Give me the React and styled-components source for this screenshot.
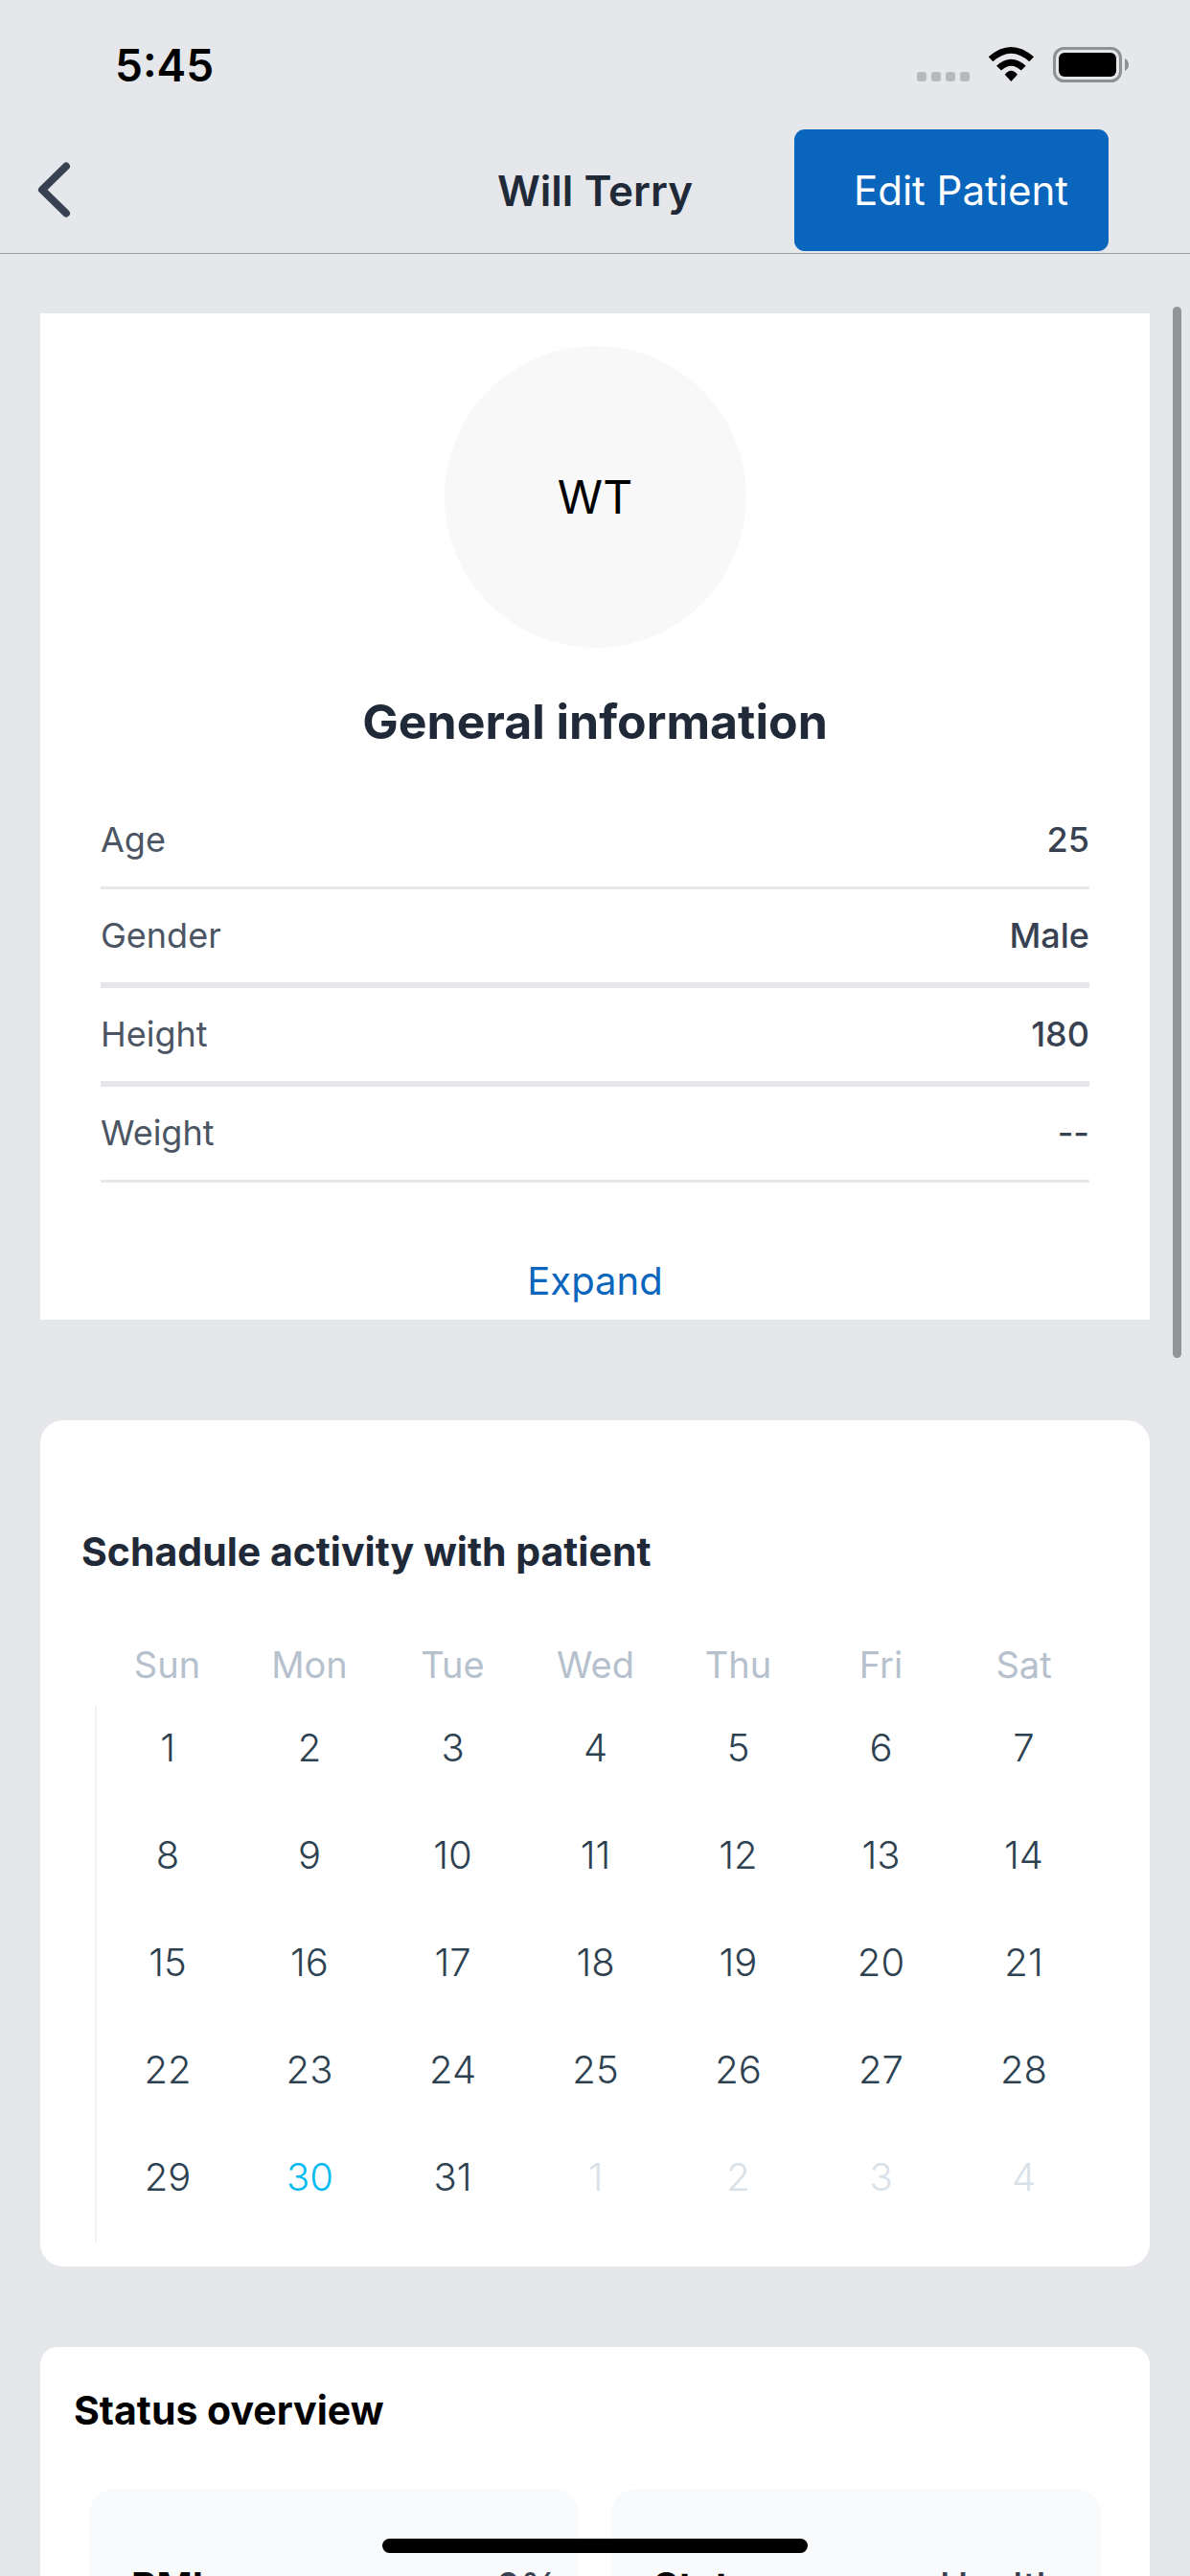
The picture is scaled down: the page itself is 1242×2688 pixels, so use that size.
import React, { useState } from 'react';
import styled, { createGlobalStyle } from 'styled-components';

const GlobalStyle = createGlobalStyle`
    * {
        box-sizing: border-box;
    }
    html, body, #root {
        height: 100%;
    }
    body {
        margin: 0;
        overflow: hidden;
        background-color: #e5e7eb;
        font-family: Inter, "Liberation Sans", sans-serif;
        color: #1f2937;
    }
    button {
        border: none;
        padding: 0;
        background-color: transparent;
        font-family: inherit;
        cursor: pointer;
    }
    h1, h2, dl, dd {
        margin: 0;
    }
`;

const Screen = styled.div`
    position: relative;
    display: flex;
    flex-direction: column;
    height: 100%;
    overflow: hidden;
`;

const StatusBar = styled.div`
    flex: none;
    display: flex;
    justify-content: space-between;
    align-items: center;
    height: 132px;
    padding: 4px 64px 0 120px;
    color: #000;
    font-size: 46px;
    font-weight: 600;
`;

const Header = styled.header`
    flex: none;
    display: grid;
    grid-template-columns: 1fr auto 1fr;
    align-items: center;
    height: 133px;
    padding: 0 85px 0 36px;
    border-bottom: 1px solid #a0a2a8;
`;

const BackButton = styled.button`
    display: flex;
    justify-self: start;
`;

const Title = styled.h1`
    padding: 2px 0 0 49px;
    font-size: 44px;
    font-weight: 600;
    line-height: 56px;
`;

const EditButton = styled.button`
    justify-self: end;
    height: 127px;
    padding: 0 42px 0 62px;
    border-radius: 11px;
    background-color: #0a65bd;
    color: #fff;
    font-size: 42px;
`;

const Content = styled.main`
    flex: 1;
    min-height: 0;
    display: flex;
    flex-direction: column;
    padding: 62px 42px 0;
    > * {
        flex: none;
    }
`;

const InfoCard = styled.section`
    display: flex;
    flex-direction: column;
    align-items: center;
    padding: 34px 63px 8px;
    margin-bottom: 105px;
    background-color: #fff;
`;

const Avatar = styled.div`
    display: flex;
    justify-content: center;
    align-items: center;
    width: 315px;
    height: 315px;
    margin-bottom: 44px;
    border-radius: 50%;
    background-color: #f8f8f8;
    color: #000;
    font-size: 48px;
`;

const InfoTitle = styled.h2`
    margin-bottom: 42px;
    font-size: 50px;
    font-weight: 700;
    line-height: 66px;
`;

const InfoList = styled.dl`
    width: 100%;
    margin-bottom: 71px;
`;

const InfoRow = styled.div`
    display: flex;
    justify-content: space-between;
    align-items: center;
    border-bottom: ${props => props.$thick ? '6px' : '3px'} solid #e5e7eb;
    font-size: 36px;
    line-height: 97px;
    dt {
        color: #4b5563;
    }
    dd {
        color: #374151;
        font-weight: 500;
    }
`;

const ExpandButton = styled.button`
    color: #0a65bd;
    font-size: 40px;
    line-height: 64px;
`;

const Card = styled.section`
    background-color: #fff;
    border-radius: ${props => props.$radius};
    padding: ${props => props.$padding};
    margin-bottom: 84px;
`;

const CardTitle = styled.h2`
    color: ${props => props.$color};
    font-size: 41px;
    font-weight: 700;
    line-height: 60px;
`;

const CalendarWrap = styled.div`
    padding: 55px 0 0 14px;
`;

const Calendar = styled.table`
    width: 100%;
    border-collapse: collapse;
    table-layout: fixed;
    text-align: center;
    th, td {
        padding: 0;
    }
    th {
        height: 76px;
        padding-bottom: 10px;
        color: #b6c1cd;
        font-size: 38px;
        font-weight: 400;
    }
    td {
        height: 112px;
        padding-bottom: 26px;
    }
    tbody {
        border-left: 2px solid #f0f2f4;
    }
`;

const Day = styled.button`
    color: ${props => props.$color};
    font-size: 40px;
    font-weight: 300;
`;

const StatRow = styled.div`
    display: grid;
    grid-template-columns: 1fr 1fr;
    gap: 34px;
    padding: 52px 15px 0 16px;
`;

const Stat = styled.div`
    display: flex;
    justify-content: space-between;
    align-items: baseline;
    padding: 72px 21px 60px 44px;
    border-radius: 26px;
    background-color: #f9fafb;
    line-height: 60px;
    strong {
        color: #000;
        font-size: 40px;
        font-weight: 700;
    }
    span {
        color: #374151;
        font-size: 40px;
        font-weight: 500;
    }
`;

const ScrollThumb = styled.div`
    position: absolute;
    top: 320px;
    right: 9px;
    width: 9px;
    height: 1097px;
    border-radius: 5px;
    background-color: #939498;
`;

const HomeIndicator = styled.div`
    position: absolute;
    bottom: 24px;
    left: 50%;
    width: 444px;
    height: 15px;
    border-radius: 8px;
    background-color: #000;
    transform: translateX(-50%);
`;

const info = [
    { label: 'Age', value: '25' },
    { label: 'Gender', value: 'Male', thick: true },
    { label: 'Height', value: '180', thick: true },
    { label: 'Weight', value: '--' },
];

const weekDays = ['Sun', 'Mon', 'Tue', 'Wed', 'Thu', 'Fri', 'Sat'];
const daysInMonth = 31;
const today = 30;

const weeks = [0, 1, 2, 3, 4].map((week) => weekDays.map((_, i) => week * 7 + i + 1));

const dayColor = (day) => {
    if (day > daysInMonth) return '#d9e1e8';
    return day === today ? '#00bbf2' : '#2d4150';
};

function StatusIcons() {
  return (
    <svg width="224" height="46" viewBox="0 2 224 46" aria-hidden="true">
        <g fill="#b8b9bd">
            <rect x="3" y="32" width="10" height="10" rx="3" />
            <rect x="18" y="32" width="10" height="10" rx="3" />
            <rect x="33" y="32" width="10" height="10" rx="3" />
            <rect x="48" y="32" width="10" height="10" rx="3" />
        </g>
        <path d="M77.700 16.300Q101.300 -4.300 125 16.300L120.300 21.300Q101.300 4.100 82.300 21.300Z" />
        <path d="M86 25.700Q101.300 11.700 116.700 25.700L111.700 30.500Q101.300 21 91 30.500Z" />
        <path d="M94.700 34.700Q101.300 26.700 108 34.700L101.300 42Z" />
        <rect x="146.500" y="7.500" width="69" height="34" rx="10" fill="none" stroke="#8f9093" strokeWidth="3" />
        <rect x="151" y="12" width="60" height="25" rx="6" />
        <path d="M220 18Q224 20 224 24.500T220 31Z" fill="#8f9093" />
    </svg>
  )
}

export default function App() {

    const [isExpanded, setIsExpanded] = useState(false);

  return (
    <Screen>
        <GlobalStyle />
        <StatusBar>
            <span>5:45</span>
            <StatusIcons />
        </StatusBar>
        <Header>
            <BackButton aria-label="Back">
                <svg width="42" height="64" viewBox="0 0 42 64" fill="none" stroke="#374151" strokeWidth="8" strokeLinecap="round" strokeLinejoin="round">
                    <path d="M33 7.500L8 32L33 56.500" />
                </svg>
            </BackButton>
            <Title>Will Terry</Title>
            <EditButton>Edit Patient</EditButton>
        </Header>
        <Content>
            <InfoCard>
                <Avatar>WT</Avatar>
                <InfoTitle>General information</InfoTitle>
                <InfoList>
                    {info.map(({ label, value, thick }) => (
                        <InfoRow key={label} $thick={thick}>
                            <dt>{label}</dt>
                            <dd>{value}</dd>
                        </InfoRow>
                    ))}
                </InfoList>
                <ExpandButton aria-expanded={isExpanded} onClick={() => setIsExpanded(!isExpanded)}>
                    Expand
                </ExpandButton>
            </InfoCard>
            <Card $radius="24px" $padding="107px 57px 25px 43px">
                <CardTitle $color="#1f2937">Schadule activity with patient</CardTitle>
                <CalendarWrap>
                    <Calendar>
                        <thead>
                            <tr>
                                {weekDays.map((name) => <th key={name} scope="col">{name}</th>)}
                            </tr>
                        </thead>
                        <tbody>
                            {weeks.map((week) => (
                                <tr key={week[0]}>
                                    {week.map((day) => (
                                        <td key={day}>
                                            <Day $color={dayColor(day)}>
                                                {day > daysInMonth ? day - daysInMonth : day}
                                            </Day>
                                        </td>
                                    ))}
                                </tr>
                            ))}
                        </tbody>
                    </Calendar>
                </CalendarWrap>
            </Card>
            <Card $radius="18px" $padding="36px 36px 36px 35px">
                <CardTitle $color="#000">Status overview</CardTitle>
                <StatRow>
                    <Stat>
                        <strong>BMI</strong>
                        <span>0%</span>
                    </Stat>
                    <Stat>
                        <strong>Status</strong>
                        <span>Healthy</span>
                    </Stat>
                </StatRow>
            </Card>
        </Content>
        <ScrollThumb />
        <HomeIndicator />
    </Screen>
  )
}
